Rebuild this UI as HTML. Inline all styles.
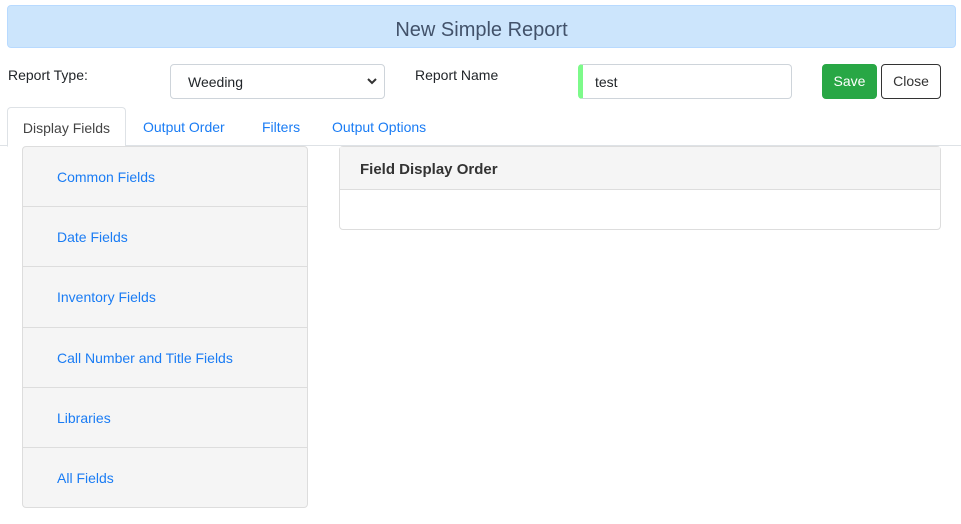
<!DOCTYPE html>
<html><head><style>
*{box-sizing:border-box;margin:0;padding:0}
body{width:961px;height:524px;background:#fff;font-family:"Liberation Sans",sans-serif;font-size:14px;color:#212529;position:relative;overflow:hidden}
.abs{position:absolute}
.hdr{left:7px;top:5px;width:949px;height:43px;background:#cce5fc;border:1px solid #b8daff;border-radius:4px;text-align:center;line-height:48px;font-size:20px;color:#42526a}
.lbl{font-size:14px;color:#212529}
.sel{left:170px;top:64px;width:215px;height:35px;border:1px solid #ced4da;border-radius:4px;padding-left:17px;line-height:34px}
.inp{left:578px;top:64px;width:214px;height:35px;border:1px solid #ced4da;border-left:5px solid #7dfa8a;border-radius:4px;padding-left:12px;line-height:34px}
.btn{top:64px;height:35px;border-radius:4px;line-height:33px;text-align:center}
.tabs{left:0;top:145px;width:961px;border-top:1px solid #dee2e6}
.tab{color:#1a7cf4;font-size:14px}
.act{left:7px;top:107px;width:119px;height:40px;border:1px solid #dee2e6;border-bottom:1px solid #fff;border-radius:4px 4px 0 0;background:#fff;line-height:41px;text-align:center;color:#444}
.lp{left:22px;top:146px;width:286px;height:362px;border:1px solid #ddd;border-radius:4px;background:#f5f5f5}
.item{height:60.2px;border-bottom:1px solid #ddd;padding-left:34px;line-height:60px;color:#1a7cf4}
.rp{left:339px;top:146px;width:602px;height:84px;border:1px solid #ddd;border-radius:4px}
.rh{height:43px;background:#f5f5f5;border-bottom:1px solid #ddd;padding-left:20px;line-height:46px;font-weight:bold;font-size:15px;color:#333}
</style></head><body>
<div class="abs hdr">New Simple Report</div>
<div class="abs lbl" style="left:8px;top:67px">Report Type:</div>
<div class="abs sel">Weeding<svg style="position:absolute;right:7px;top:12px" width="10" height="8" viewBox="0 0 10 8"><path d="M1 2l4 4 4-4" stroke="#333" stroke-width="2" fill="none"/></svg></div>
<div class="abs lbl" style="left:415px;top:67px">Report Name</div>
<div class="abs inp">test</div>
<div class="abs btn" style="left:822px;width:55px;background:#28a745;color:#fff;border:1px solid #28a745">Save</div>
<div class="abs btn" style="left:881px;width:60px;border:1px solid #333;color:#333">Close</div>
<div class="abs tabs"></div>
<div class="abs act">Display Fields</div>
<div class="abs tab" style="left:143px;top:119px">Output Order</div>
<div class="abs tab" style="left:262px;top:119px">Filters</div>
<div class="abs tab" style="left:332px;top:119px">Output Options</div>
<div class="abs lp">
<div class="item">Common Fields</div>
<div class="item">Date Fields</div>
<div class="item">Inventory Fields</div>
<div class="item">Call Number and Title Fields</div>
<div class="item">Libraries</div>
<div class="item" style="border-bottom:none">All Fields</div>
</div>
<div class="abs rp"><div class="rh">Field Display Order</div></div>
</body></html>
